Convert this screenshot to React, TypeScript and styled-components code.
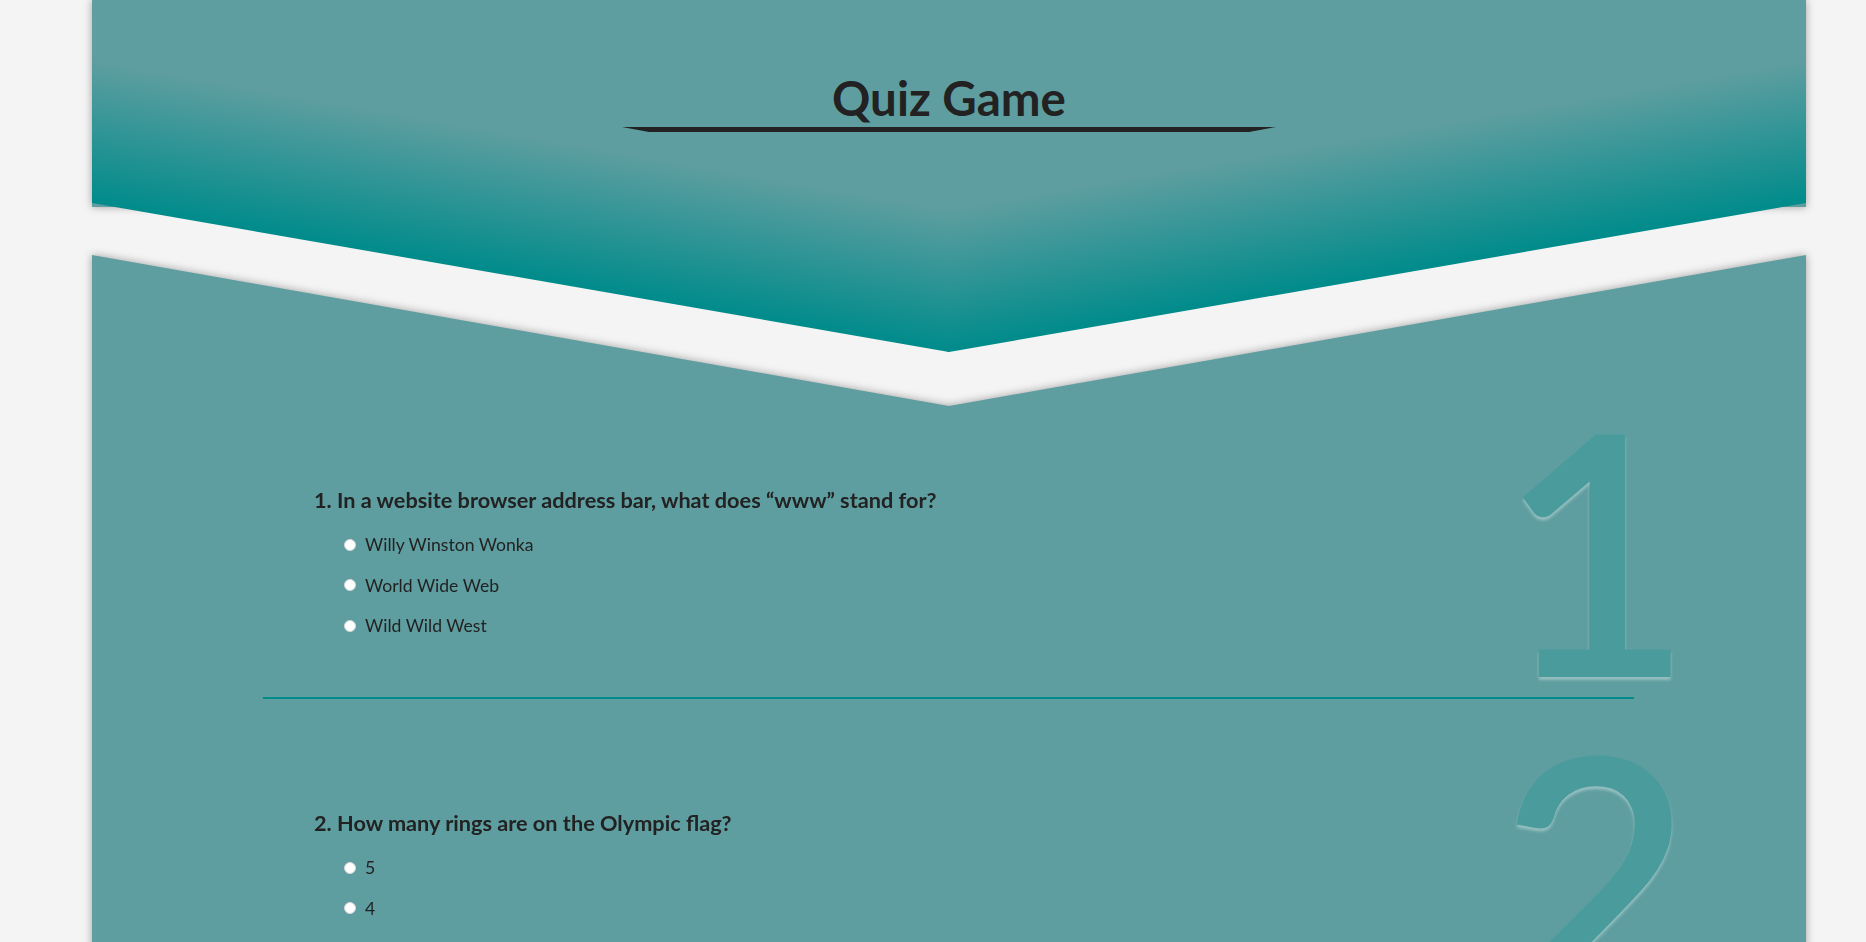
import React from "react";
import styled, { createGlobalStyle } from "styled-components";

const GlobalStyle = createGlobalStyle`
  html, body {
    margin: 0;
    padding: 0;
    background: #f4f4f4;
  }
  body {
    font-family: Lato, "Open Sans", "Liberation Sans", sans-serif;
    color: #222;
    overflow: hidden;
  }
`;

const Page = styled.div`
  width: 1714px;
  margin-left: 92px;
`;

const Header = styled.header`
  position: relative;
  height: 207px;
  box-sizing: border-box;
  padding-top: 69px;
  background: cadetblue;
  box-shadow: 0 0 8px rgba(0, 0, 0, 0.35);

  &::before {
    content: "";
    position: absolute;
    left: 0;
    top: 0;
    width: 100%;
    height: 352px;
    clip-path: polygon(0 0, 100% 0, 100% 203px, 50% 352px, 0 203px);
    background:
      linear-gradient(189.87deg, cadetblue 205px, darkcyan 347px) left top / 50% 100% no-repeat,
      linear-gradient(170.13deg, cadetblue 205px, darkcyan 347px) right top / calc(50% + 2px) 100% no-repeat;
  }
`;

const Title = styled.h1`
  position: relative;
  z-index: 1;
  margin: 0;
  font-size: 47.5px;
  line-height: 57.6px;
  font-weight: 700;
  text-align: center;
  color: #222;
`;

const TitleRule = styled.div`
  position: relative;
  z-index: 1;
  width: 600px;
  height: 0;
  margin: 0 auto;
  border-top: 5px solid #222;
  border-left: 27px solid transparent;
  border-right: 27px solid transparent;
`;

const MainShadow = styled.main`
  margin-top: 48px;
  filter: drop-shadow(0 0 4px rgba(0, 0, 0, 0.35));
`;

const Panel = styled.div`
  background: cadetblue;
  clip-path: polygon(0 0, 50% 151px, 100% 0, 100% 100%, 0 100%);
  padding: 121px 172px 40px 171px;
`;

const QuestionBlock = styled.section`
  position: relative;
  padding: 110px 0 60px 51px;
  border-bottom: 2px solid darkcyan;
`;

const BigNumber = styled.span`
  position: absolute;
  top: 3px;
  right: -59px;
  font-size: 336px;
  line-height: 1;
  font-weight: 600;
  color: #4a9b9c;
  text-shadow: 0 3px 3px rgba(255, 255, 255, 0.35);
  pointer-events: none;
  user-select: none;
`;

const Question = styled.h2`
  position: relative;
  margin: 0;
  font-size: 21.7px;
  line-height: 28.8px;
  font-weight: 700;
  color: #222;
`;

const Options = styled.ul`
  list-style: none;
  margin: 19px 0 0;
  padding: 0 0 0 30px;
  display: flex;
  flex-direction: column;
  gap: 18.5px;
`;

const OptionLabel = styled.label`
  display: flex;
  align-items: center;
  gap: 9px;
  height: 22px;
  font-size: 17.6px;
  color: #222;
  cursor: pointer;
`;

const Radio = styled.input`
  appearance: none;
  margin: 0;
  width: 12px;
  height: 12px;
  border-radius: 50%;
  background: #fff;
  border: 1px solid #d6d6d6;
  box-sizing: border-box;
`;

type Q = { text: string; options: string[] };

const questions: Q[] = [
  {
    text: "In a website browser address bar, what does \u201cwww\u201d stand for?",
    options: ["Willy Winston Wonka", "World Wide Web", "Wild Wild West"],
  },
  {
    text: "How many rings are on the Olympic flag?",
    options: ["5", "4", "6"],
  },
  {
    text: "What is the capital of Australia?",
    options: ["Sydney", "Canberra", "Melbourne"],
  },
];

export default function App() {
  return (
    <>
      <GlobalStyle />
      <Page>
        <Header>
          <Title>Quiz Game</Title>
          <TitleRule />
        </Header>
        <MainShadow>
          <Panel>
            {questions.map((q, i) => (
              <QuestionBlock key={i}>
                <BigNumber aria-hidden>{i + 1}</BigNumber>
                <Question>
                  {i + 1}. {q.text}
                </Question>
                <Options>
                  {q.options.map((o) => (
                    <li key={o}>
                      <OptionLabel>
                        <Radio type="radio" name={`q${i}`} value={o} />
                        {o}
                      </OptionLabel>
                    </li>
                  ))}
                </Options>
              </QuestionBlock>
            ))}
          </Panel>
        </MainShadow>
      </Page>
    </>
  );
}
